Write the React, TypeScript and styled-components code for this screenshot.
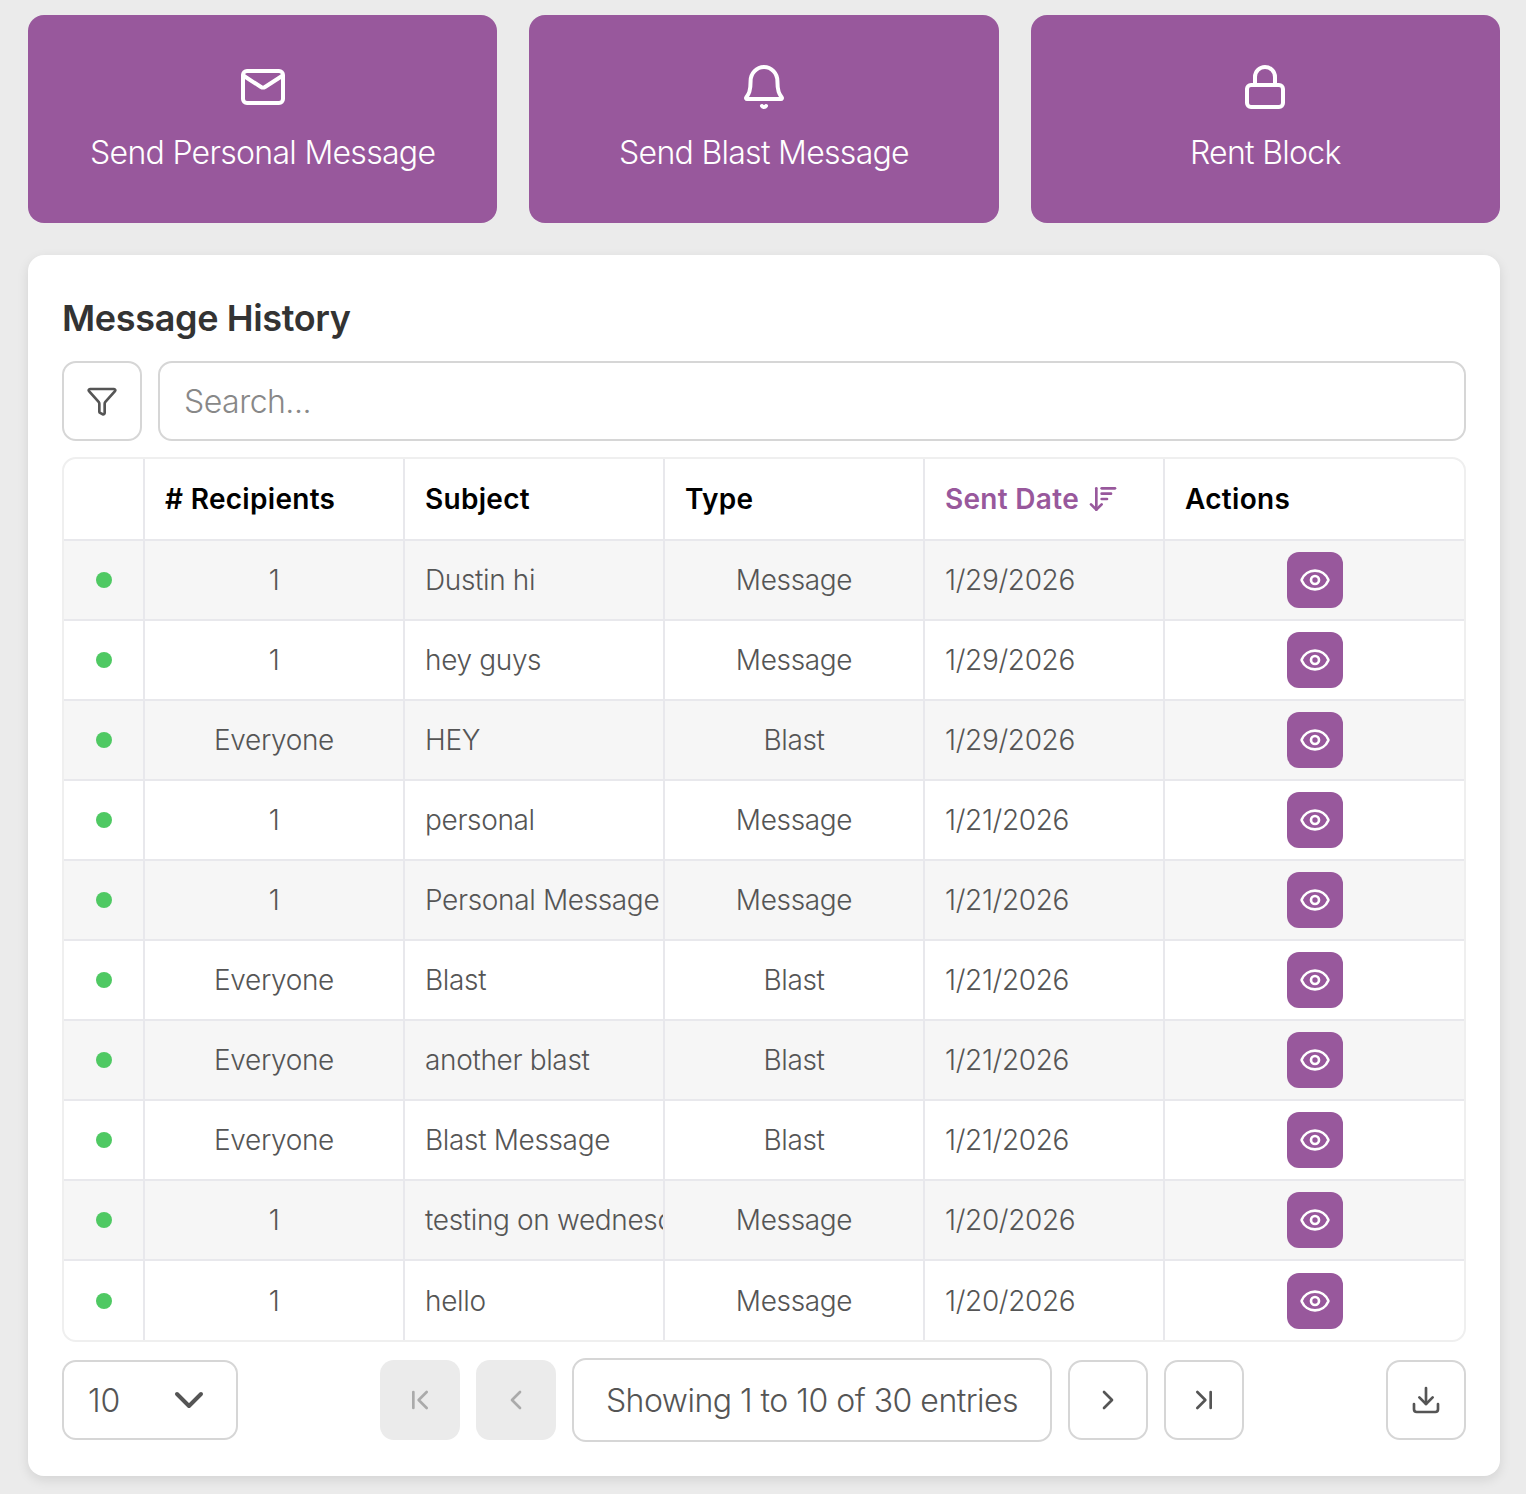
import React from 'react'
import styled, { createGlobalStyle } from 'styled-components'
import {
  ArrowDownWideNarrow,
  ChevronDown,
  ChevronFirst,
  ChevronLast,
  ChevronLeft,
  ChevronRight,
  Download,
  Eye,
  Funnel,
  Lock
} from 'lucide-react'

const PURPLE = '#98589c'

const GlobalStyle = createGlobalStyle`
  html, body {
    margin: 0;
    padding: 0;
    background: #ebebeb;
    font-family: Inter, "Liberation Sans", sans-serif;
  }
  * {
    box-sizing: border-box;
  }
`

const Page = styled.div`
  display: flex;
  flex-direction: column;
  gap: 32px;
  width: 1526px;
  height: 1494px;
  padding: 15px 26px 0 28px;
`

const TileRow = styled.div`
  display: grid;
  grid-template-columns: repeat(3, 1fr);
  gap: 32px;
`

const Tile = styled.button`
  display: flex;
  flex-direction: column;
  align-items: center;
  height: 208px;
  padding: 48px 0 0;
  border: none;
  border-radius: 16px;
  background: ${PURPLE};
  color: #fff;
  font-family: inherit;
  font-size: 32px;
  font-weight: 300;
  letter-spacing: -0.7px;
  line-height: 48px;
`

const TileIcon = styled.svg`
  display: block;
  flex: none;
  width: 48px;
  height: 48px;
  margin-bottom: 18px;
  fill: none;
  stroke: currentColor;
  stroke-width: 2;
  stroke-linecap: round;
  stroke-linejoin: round;
`

const LockIcon = styled(Lock)`
  flex: none;
  margin-bottom: 18px;
`

const Card = styled.section`
  display: flex;
  flex-direction: column;
  height: 1221px;
  padding: 35px 34px 0 34px;
  border-radius: 16px;
  background: #fff;
  box-shadow: 0 4px 12px rgba(0, 0, 0, 0.1);
`

const Title = styled.h2`
  margin: 0 0 15px;
  color: #333;
  font-size: 36px;
  font-weight: 600;
  letter-spacing: -0.35px;
  line-height: 56px;
`

const SearchRow = styled.div`
  display: flex;
  gap: 16px;
  margin-bottom: 16px;
`

const IconButton = styled.button<{ $disabled?: boolean }>`
  display: flex;
  flex: none;
  align-items: center;
  justify-content: center;
  width: 80px;
  height: 80px;
  padding: 0;
  border: ${props => (props.$disabled ? 'none' : '2px solid #d6d6d6')};
  border-radius: 14px;
  background: ${props => (props.$disabled ? '#ebebeb' : '#fff')};
  color: ${props => (props.$disabled ? '#aaa' : '#555')};
`

const SearchBox = styled.div`
  flex: 1;
  height: 80px;
  padding-left: 24px;
  border: 2px solid #d6d6d6;
  border-radius: 14px;
  color: #888;
  font-size: 32px;
  font-weight: 300;
  letter-spacing: -0.5px;
  line-height: 77px;
`

const TableFrame = styled.div`
  height: 885px;
  border: 2px solid #efefef;
  border-radius: 14px;
  overflow: hidden;
`

const Table = styled.table`
  width: 100%;
  border-collapse: collapse;
  table-layout: fixed;
`

const HeadCell = styled.th<{ $active?: boolean }>`
  height: 81px;
  padding: 0 0 0 20px;
  border-left: 2px solid #e8e8ec;
  color: ${props => (props.$active ? PURPLE : '#000')};
  font-size: 28px;
  font-weight: 600;
  letter-spacing: 0.3px;
  text-align: left;
  &:first-child {
    border-left: none;
  }
`

const SortLabel = styled.span`
  display: flex;
  align-items: center;
  gap: 8px;
`

const Row = styled.tr`
  border-top: 2px solid #e8e8ec;
  &:nth-child(odd) {
    background: #f6f6f6;
  }
`

const Cell = styled.td<{ $center?: boolean }>`
  height: 80px;
  padding: 0 0 0 ${props => (props.$center ? '0' : '20px')};
  border-left: 2px solid #e8e8ec;
  color: #555;
  font-size: 28px;
  font-weight: 300;
  letter-spacing: -0.35px;
  text-align: ${props => (props.$center ? 'center' : 'left')};
  white-space: nowrap;
  overflow: hidden;
  &:first-child {
    border-left: none;
  }
`

const StatusDot = styled.span`
  display: block;
  width: 16px;
  height: 16px;
  margin: 0 auto;
  border-radius: 50%;
  background: #4fc963;
`

const ViewButton = styled.button`
  display: inline-flex;
  align-items: center;
  justify-content: center;
  width: 56px;
  height: 56px;
  padding: 0;
  border: none;
  border-radius: 12px;
  background: ${PURPLE};
  color: #fff;
  vertical-align: middle;
`

const Footer = styled.div`
  display: flex;
  align-items: center;
  justify-content: space-between;
  margin-top: 16px;
`

const PageSize = styled.div`
  display: flex;
  align-items: center;
  justify-content: space-between;
  width: 176px;
  height: 80px;
  padding: 0 23px 0 24px;
  border: 2px solid #d6d6d6;
  border-radius: 14px;
  color: #555;
  font-size: 32px;
  font-weight: 300;
`

const Pager = styled.div`
  display: flex;
  align-items: center;
  gap: 16px;
`

const PageInfo = styled.div`
  width: 480px;
  height: 84px;
  border: 2px solid #d6d6d6;
  border-radius: 14px;
  color: #555;
  font-size: 32px;
  font-weight: 300;
  letter-spacing: -0.5px;
  line-height: 81px;
  text-align: center;
`

const rows = [
  ['1', 'Dustin hi', 'Message', '1/29/2026'],
  ['1', 'hey guys', 'Message', '1/29/2026'],
  ['Everyone', 'HEY', 'Blast', '1/29/2026'],
  ['1', 'personal', 'Message', '1/21/2026'],
  ['1', 'Personal Message', 'Message', '1/21/2026'],
  ['Everyone', 'Blast', 'Blast', '1/21/2026'],
  ['Everyone', 'another blast', 'Blast', '1/21/2026'],
  ['Everyone', 'Blast Message', 'Blast', '1/21/2026'],
  ['1', 'testing on wednesday', 'Message', '1/20/2026'],
  ['1', 'hello', 'Message', '1/20/2026']
]

const App: React.FC = () => {
  return (
    <Page>
      <GlobalStyle />
      <TileRow>
        <Tile>
          <TileIcon viewBox="0 0 24 24">
            <rect x="2" y="4" width="20" height="16" rx="2" />
            <path d="M2.5 6.5 11 12a2 2 0 0 0 2 0l8.500-5.500" />
          </TileIcon>
          Send Personal Message
        </Tile>
        <Tile>
          <TileIcon viewBox="0 0 24 24">
            <path d="M3.500 18h17c.4 0 .6-.4.4-.7C19.800 15.700 18.700 14.500 18.700 9A6.700 7 0 0 0 5.300 9c0 5.500-1.100 6.700-2.200 8.300-.2.300 0 .7.400.7Z" />
            <path d="M11 21.500a1.200 1.200 0 0 0 2 0" />
          </TileIcon>
          Send Blast Message
        </Tile>
        <Tile>
          <LockIcon size={48} strokeWidth={2} />
          Rent Block
        </Tile>
      </TileRow>
      <Card>
        <Title>Message History</Title>
        <SearchRow>
          <IconButton>
            <Funnel size={32} strokeWidth={2} />
          </IconButton>
          <SearchBox>Search...</SearchBox>
        </SearchRow>
        <TableFrame>
          <Table>
            <colgroup>
              <col width={80} />
              <col width={260} />
              <col width={260} />
              <col width={260} />
              <col width={240} />
              <col />
            </colgroup>
            <thead>
              <tr>
                <HeadCell />
                <HeadCell># Recipients</HeadCell>
                <HeadCell>Subject</HeadCell>
                <HeadCell>Type</HeadCell>
                <HeadCell $active>
                  <SortLabel>
                    Sent Date
                    <ArrowDownWideNarrow size={32} strokeWidth={2} />
                  </SortLabel>
                </HeadCell>
                <HeadCell>Actions</HeadCell>
              </tr>
            </thead>
            <tbody>
              {rows.map((row, index) => (
                <Row key={index}>
                  <Cell $center>
                    <StatusDot />
                  </Cell>
                  <Cell $center>{row[0]}</Cell>
                  <Cell>{row[1]}</Cell>
                  <Cell $center>{row[2]}</Cell>
                  <Cell>{row[3]}</Cell>
                  <Cell $center>
                    <ViewButton>
                      <Eye size={32} strokeWidth={2} />
                    </ViewButton>
                  </Cell>
                </Row>
              ))}
            </tbody>
          </Table>
        </TableFrame>
        <Footer>
          <PageSize>
            10
            <ChevronDown size={48} strokeWidth={2} />
          </PageSize>
          <Pager>
            <IconButton $disabled>
              <ChevronFirst size={32} strokeWidth={2} />
            </IconButton>
            <IconButton $disabled>
              <ChevronLeft size={32} strokeWidth={2} />
            </IconButton>
            <PageInfo>Showing 1 to 10 of 30 entries</PageInfo>
            <IconButton>
              <ChevronRight size={32} strokeWidth={2} />
            </IconButton>
            <IconButton>
              <ChevronLast size={32} strokeWidth={2} />
            </IconButton>
          </Pager>
          <IconButton>
            <Download size={32} strokeWidth={2} />
          </IconButton>
        </Footer>
      </Card>
    </Page>
  )
}

export default App
